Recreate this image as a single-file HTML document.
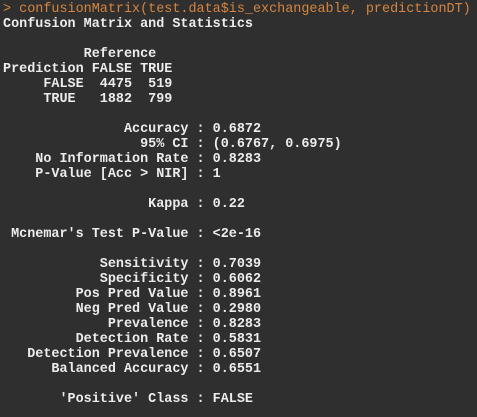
<!DOCTYPE html>
<html><head><meta charset="utf-8"><style>
html,body{margin:0;padding:0;background:#2f2f2f;width:477px;height:417px;overflow:hidden}
pre{margin:0;padding:2px 0 0 3px;font-family:"Liberation Mono",monospace;font-size:13.45px;line-height:15px;color:#ececec;font-weight:bold;white-space:pre}
.c{color:#d5853f;font-weight:normal}
</style></head><body><pre><span class="c">&gt; confusionMatrix(test.data$is_exchangeable, predictionDT)</span>
Confusion Matrix and Statistics

          Reference
Prediction FALSE TRUE
     FALSE  4475  519
     TRUE   1882  799
                                          
               Accuracy : 0.6872          
                 95% CI : (0.6767, 0.6975)
    No Information Rate : 0.8283          
    P-Value [Acc &gt; NIR] : 1               
                                          
                  Kappa : 0.22            
                                          
 Mcnemar's Test P-Value : &lt;2e-16          
                                          
            Sensitivity : 0.7039          
            Specificity : 0.6062          
         Pos Pred Value : 0.8961          
         Neg Pred Value : 0.2980          
             Prevalence : 0.8283          
         Detection Rate : 0.5831          
   Detection Prevalence : 0.6507          
      Balanced Accuracy : 0.6551          
                                          
       'Positive' Class : FALSE           
</pre></body></html>
